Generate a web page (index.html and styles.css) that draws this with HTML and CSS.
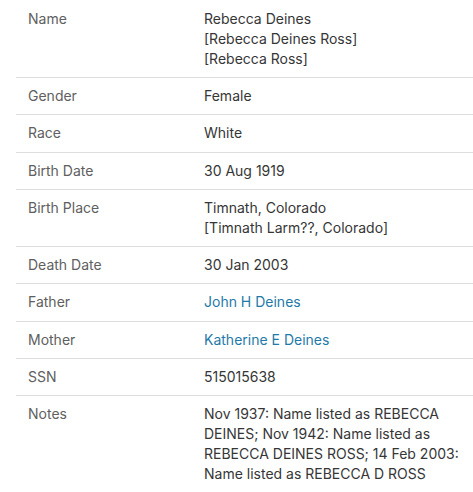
FILE: index.html
```html
<!DOCTYPE html>
<html>
<head>
<meta charset="utf-8">
<link rel="stylesheet" href="styles.css">
</head>
<body>
<div class="facts">
  <div class="row first"><div class="label">Name</div><div class="value">Rebecca Deines<br>[Rebecca Deines Ross]<br>[Rebecca Ross]</div></div>
  <div class="row"><div class="label">Gender</div><div class="value">Female</div></div>
  <div class="row"><div class="label">Race</div><div class="value">White</div></div>
  <div class="row"><div class="label">Birth Date</div><div class="value">30 Aug 1919</div></div>
  <div class="row"><div class="label">Birth Place</div><div class="value">Timnath, Colorado<br>[Timnath Larm??, Colorado]</div></div>
  <div class="row"><div class="label">Death Date</div><div class="value">30 Jan 2003</div></div>
  <div class="row"><div class="label">Father</div><div class="value"><a class="link" href="#">John H Deines</a></div></div>
  <div class="row"><div class="label">Mother</div><div class="value"><a class="link" href="#">Katherine E Deines</a></div></div>
  <div class="row"><div class="label">SSN</div><div class="value">515015638</div></div>
  <div class="row last"><div class="label">Notes</div><div class="value">Nov 1937: Name listed as REBECCA DEINES; Nov 1942: Name listed as REBECCA DEINES ROSS; 14 Feb 2003: Name listed as REBECCA D ROSS</div></div>
</div>
</body>
</html>
```
FILE: styles.css
```css
html, body {
  margin: 0;
  padding: 0;
  background: #fff;
}
body {
  font-family: Inter, "Liberation Sans", sans-serif;
  font-size: 14px;
  line-height: 20px;
  color: #333;
}
.facts {
  margin-left: 16px;
}
.row {
  display: grid;
  grid-template-columns: 176px 1fr;
  padding: 8px 4px 8.25px 12px;
  border-bottom: 1px solid #dedede;
}
.row.first {
  padding-top: 8.75px;
}
.row.last {
  border-bottom: none;
}
.label {
  color: #606060;
}
.value {
  color: #363636;
}
.link {
  color: #1f7aa8;
  text-decoration: none;
}
```
